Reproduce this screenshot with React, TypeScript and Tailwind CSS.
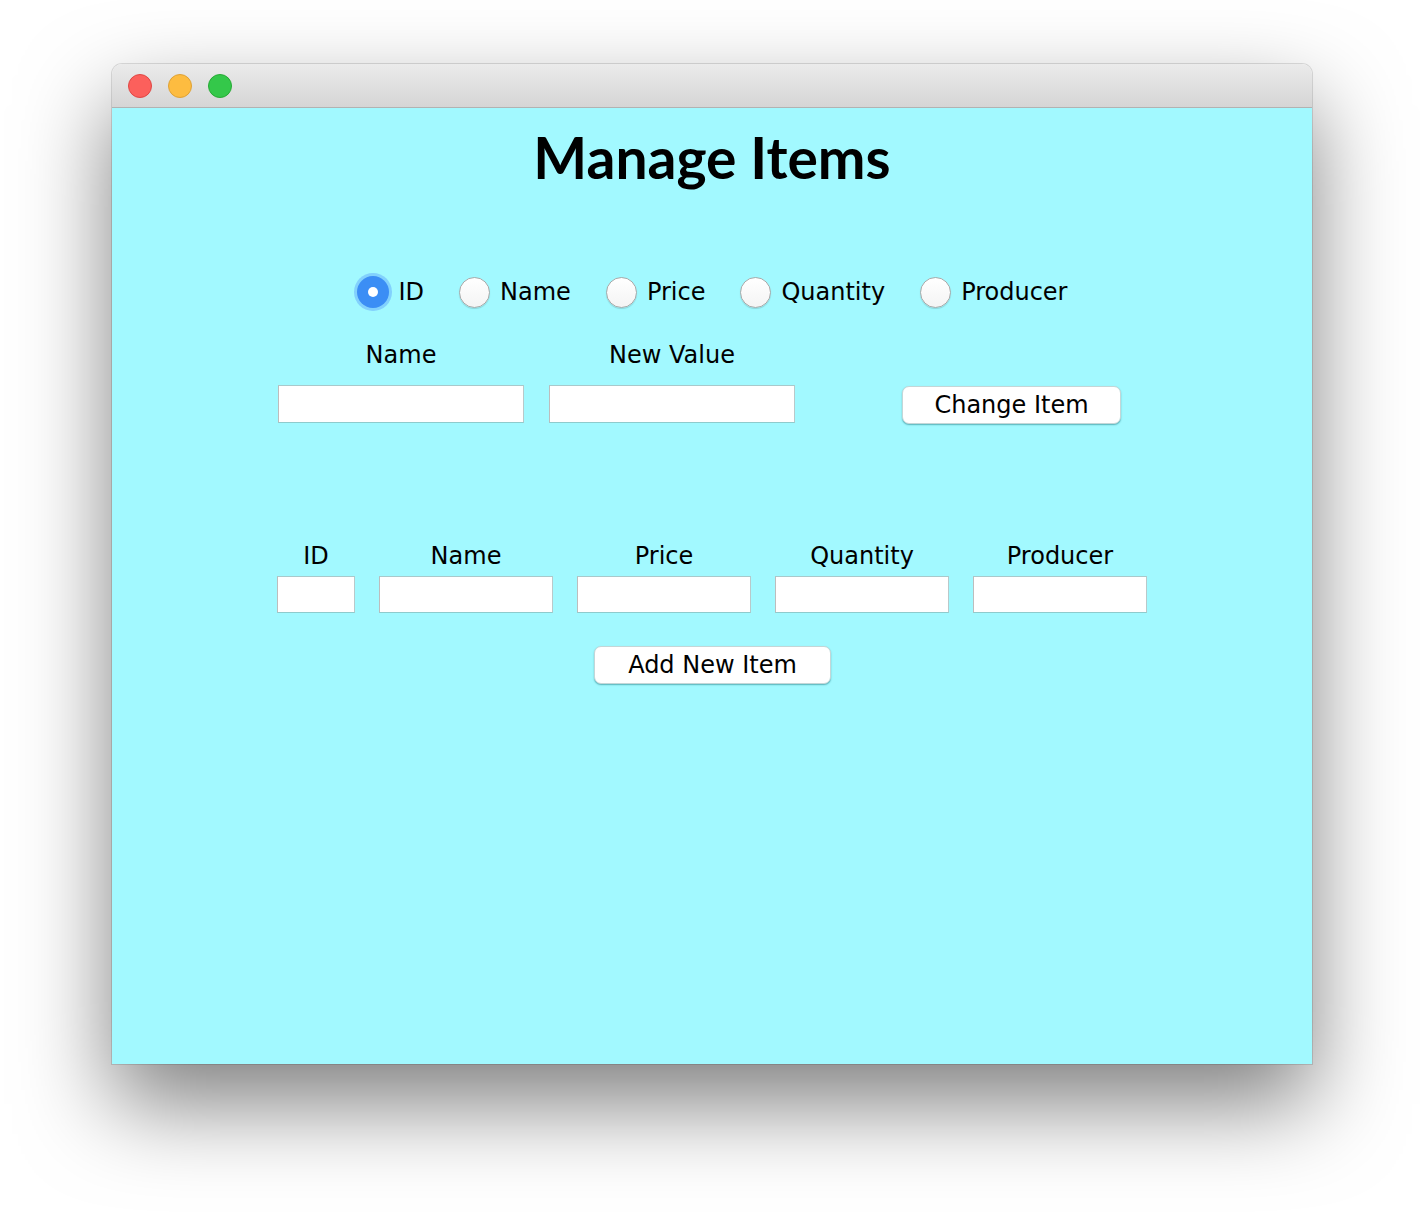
import React from "react";

const label = "font-['DejaVu_Sans',sans-serif] text-[24px] text-black";

function Radio({ checked, text }: { checked?: boolean; text: string }) {
  return (
    <div className="flex items-center gap-[10px]">
      {checked ? (
        <div className="w-[32px] h-[32px] rounded-full bg-[#3b8ef5] shadow-[0_0_0_3px_rgba(90,160,250,0.45)] flex items-center justify-center">
          <div className="w-[10px] h-[10px] rounded-full bg-white" />
        </div>
      ) : (
        <div className="w-[31px] h-[31px] rounded-full bg-gradient-to-b from-white to-[#f4f4f4] border border-[#a9a9a9] shadow-[0_1px_1px_rgba(0,0,0,0.15)]" />
      )}
      <span className={label}>{text}</span>
    </div>
  );
}

function Field({ w, h }: { w: string; h: string }) {
  return (
    <div
      className={`${w} ${h} bg-white border border-t-[#a9c9cb] border-l-[#bdbdbd] border-r-[#b9c9ca] border-b-[#8ecbcd]`}
    />
  );
}

function Button({ text, w }: { text: string; w: string }) {
  return (
    <div
      className={`${w} h-[38px] bg-white rounded-[7px] border border-[#c4d6d7] shadow-[0_1px_1.5px_rgba(0,90,100,0.45)] flex items-center justify-center ${label}`}
    >
      {text}
    </div>
  );
}

function Col({ text, fw }: { text: string; fw: string }) {
  return (
    <div className="flex flex-col items-center">
      <div className={`h-[30px] leading-[30px] ${label}`}>{text}</div>
      <div className="mt-[5px]">
        <Field w={fw} h="h-[37px]" />
      </div>
    </div>
  );
}

export default function App() {
  return (
    <div className="w-[1424px] h-[1224px] bg-white pt-[64px] pl-[112px]">
      <div className="w-[1200px] h-[1000px] flex flex-col rounded-t-[10px] shadow-[0_40px_90px_rgba(0,0,0,0.5),0_0_0_1px_rgba(0,0,0,0.12)]">
        <div className="h-[44px] rounded-t-[10px] bg-gradient-to-b from-[#ebebeb] to-[#d5d5d5] border-b border-[#b2b2b2] flex items-center pl-[16px] gap-[16px]">
          <div className="w-[24px] h-[24px] rounded-full bg-[#fc605c] border border-[#df4744]" />
          <div className="w-[24px] h-[24px] rounded-full bg-[#fdbc40] border border-[#dea236]" />
          <div className="w-[24px] h-[24px] rounded-full bg-[#34c84a] border border-[#27aa35]" />
        </div>
        <div className="flex-1 bg-[#a2f9ff] flex flex-col">
          <div className="h-[98px] flex items-center justify-center">
            <h1 className="font-['Lato',sans-serif] font-bold text-[57px] text-black leading-none">
              Manage Items
            </h1>
          </div>
          <div className="mt-[70px] h-[32px] flex items-center justify-center gap-[35px]">
            <Radio checked text="ID" />
            <Radio text="Name" />
            <Radio text="Price" />
            <Radio text="Quantity" />
            <Radio text="Producer" />
          </div>
          <div className="mt-[32px] ml-[166px] flex items-start">
            <div className="flex flex-col items-center">
              <div className={`h-[30px] leading-[30px] ${label}`}>Name</div>
              <div className="mt-[15px]">
                <Field w="w-[246px]" h="h-[38px]" />
              </div>
            </div>
            <div className="ml-[25px] flex flex-col items-center">
              <div className={`h-[30px] leading-[30px] ${label}`}>New Value</div>
              <div className="mt-[15px]">
                <Field w="w-[246px]" h="h-[38px]" />
              </div>
            </div>
            <div className="ml-[107px] mt-[46px]">
              <Button text="Change Item" w="w-[219px]" />
            </div>
          </div>
          <div className="mt-[117px] ml-[165px] flex gap-[24px]">
            <Col text="ID" fw="w-[78px]" />
            <Col text="Name" fw="w-[174px]" />
            <Col text="Price" fw="w-[174px]" />
            <Col text="Quantity" fw="w-[174px]" />
            <Col text="Producer" fw="w-[174px]" />
          </div>
          <div className="mt-[33px] ml-[482px] flex">
            <Button text="Add New Item" w="w-[237px]" />
          </div>
        </div>
      </div>
    </div>
  );
}
